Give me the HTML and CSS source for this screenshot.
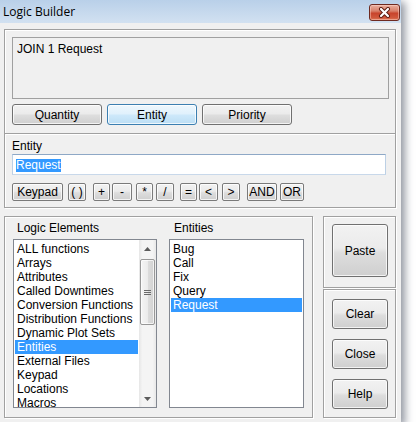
FILE: index.html
```html
<!DOCTYPE html>
<html>
<head>
<meta charset="utf-8">
<link rel="stylesheet" href="styles.css">
</head>
<body>
<div class="window">
  <div class="titlebar">
    <span class="title">Logic Builder</span>
    <div class="close">
      <svg width="13" height="11" viewBox="0 0 13 11">
        <path d="M3 2 L10 9 M10 2 L3 9" stroke="#5a1a10" stroke-width="4" stroke-linecap="round" fill="none"/>
        <path d="M3 2 L10 9 M10 2 L3 9" stroke="#ffffff" stroke-width="2.2" stroke-linecap="round" fill="none"/>
      </svg>
    </div>
  </div>
  <div class="body">
    <div class="group g-expr">
      <div class="expr">JOIN 1 Request</div>
      <div class="tabs">
        <div class="btn tab">Quantity</div>
        <div class="btn tab hot">Entity</div>
        <div class="btn tab">Priority</div>
      </div>
    </div>
    <div class="group g-entity">
      <div class="label">Entity</div>
      <div class="input"><span class="sel">Request</span></div>
      <div class="keys">
        <div class="btn key k-keypad">Keypad</div>
        <div class="btn key k-paren">( )</div>
        <div class="btn key k-plus">+</div>
        <div class="btn key k-minus">-</div>
        <div class="btn key k-mul">*</div>
        <div class="btn key k-div">/</div>
        <div class="btn key k-eq">=</div>
        <div class="btn key k-lt">&lt;</div>
        <div class="btn key k-gt">&gt;</div>
        <div class="btn key k-and">AND</div>
        <div class="btn key k-or">OR</div>
      </div>
    </div>
    <div class="bottom">
      <div class="group g-lists">
        <div class="col col-left">
          <div class="label">Logic Elements</div>
          <div class="list">
            <div class="items">
              <div class="item">ALL functions</div>
              <div class="item">Arrays</div>
              <div class="item">Attributes</div>
              <div class="item">Called Downtimes</div>
              <div class="item">Conversion Functions</div>
              <div class="item">Distribution Functions</div>
              <div class="item">Dynamic Plot Sets</div>
              <div class="item selected">Entities</div>
              <div class="item">External Files</div>
              <div class="item">Keypad</div>
              <div class="item">Locations</div>
              <div class="item">Macros</div>
            </div>
            <div class="scroll">
              <div class="arrow">
                <svg width="7" height="4" viewBox="0 0 7 4"><path d="M0 4 L3.5 0 L7 4 Z" fill="#5b5b5b"/></svg>
              </div>
              <div class="thumb">
                <svg width="7" height="5" viewBox="0 0 7 5"><path d="M0 0.5 H7 M0 2.5 H7 M0 4.5 H7" stroke="#6a6a6a" stroke-width="1"/></svg>
              </div>
              <div class="arrow down">
                <svg width="7" height="4" viewBox="0 0 7 4"><path d="M0 0 L3.5 4 L7 0 Z" fill="#5b5b5b"/></svg>
              </div>
            </div>
          </div>
        </div>
        <div class="col col-right">
          <div class="label">Entities</div>
          <div class="list">
            <div class="items">
              <div class="item">Bug</div>
              <div class="item">Call</div>
              <div class="item">Fix</div>
              <div class="item">Query</div>
              <div class="item selected">Request</div>
            </div>
          </div>
        </div>
      </div>
      <div class="side">
        <div class="group g-paste">
          <div class="btn big paste">Paste</div>
        </div>
        <div class="group g-actions">
          <div class="btn big">Clear</div>
          <div class="btn big">Close</div>
          <div class="btn big">Help</div>
        </div>
      </div>
    </div>
  </div>
</div>
</body>
</html>
```
FILE: styles.css
```css
* { box-sizing: border-box; }

body {
  margin: 0;
  background: #ffffff;
  font-family: "Liberation Sans", Arial, sans-serif;
  font-size: 12px;
  color: #000;
}

.window {
  width: 401px;
  height: 422px;
  background: #f0f0f0;
  box-shadow: 3px 3px 8px 1px rgba(40, 50, 70, 0.5);
}

.titlebar {
  height: 23px;
  background: linear-gradient(#b9d0e9, #d2e1f1);
  display: flex;
  justify-content: space-between;
  align-items: flex-start;
  padding-left: 3px;
  padding-right: 1px;
}

.title {
  font-family: "Open Sans", "Noto Sans", sans-serif;
  font-size: 12px;
  line-height: 23px;
  color: #000;
}

.close {
  margin-top: 4px;
  width: 31px;
  height: 17px;
  border: 1px solid #6e2a20;
  border-radius: 3px;
  background: linear-gradient(#eab0a0, #d8806a 40%, #c8442c 55%, #d0583c 85%, #e07a5a);
  box-shadow: inset 0 0 0 1px rgba(255, 220, 210, 0.45);
  display: flex;
  align-items: center;
  justify-content: center;
}

.body {
  padding: 6px 5px 0 4px;
}

.group {
  border: 1px solid #a0a0a0;
  box-shadow: inset 1px 1px 0 #ffffff, 1px 1px 0 #ffffff;
}

.g-expr {
  padding: 7px 0 8px 7px;
}

.expr {
  width: 377px;
  height: 62px;
  border: 1px solid #a0a0a0;
  padding: 4px;
  line-height: 14px;
}

.tabs {
  display: flex;
  gap: 5px;
  margin-top: 5px;
}

.btn {
  display: flex;
  align-items: center;
  justify-content: center;
  border: 1px solid #707070;
  border-radius: 3px;
  background: linear-gradient(#f2f2f2, #ebebeb 45%, #dddddd 55%, #cfcfcf);
  box-shadow: inset 0 0 0 1px rgba(255, 255, 255, 0.75);
  white-space: nowrap;
}

.tab {
  width: 90px;
  height: 21px;
}

.btn.hot {
  border-color: #3c7fb1;
  background: linear-gradient(#eef7fd, #e1f1fc 45%, #cde8fa 55%, #bcdef4);
}

.g-entity {
  margin-top: -1px;
  padding: 5px 9px 6px 7px;
}

.label {
  height: 14px;
  line-height: 14px;
}

.input {
  width: 374px;
  height: 21px;
  margin-top: 1px;
  border: 1px solid;
  border-color: #8ea8c6 #bcd0e5 #c8d8ea #bcd0e5;
  background: #ffffff;
  padding: 3px;
}

.sel {
  display: inline-block;
  height: 13px;
  line-height: 13px;
  background: #3399ff;
  color: #ffffff;
}

.keys {
  display: flex;
  margin-top: 8px;
  height: 18px;
}

.key {
  height: 18px;
  border-color: #7a7a7a;
  border-radius: 2px;
  line-height: 16px;
}

.k-keypad { width: 51px; }
.k-paren { width: 18px; margin-left: 5px; }
.k-plus { width: 17px; margin-left: 7px; }
.k-minus { width: 20px; margin-left: 2px; }
.k-mul { width: 17px; margin-left: 4px; }
.k-div { width: 18px; margin-left: 3px; }
.k-eq { width: 17px; margin-left: 6px; }
.k-lt { width: 19px; margin-left: 2px; }
.k-gt { width: 18px; margin-left: 4px; }
.k-and { width: 30px; margin-left: 7px; }
.k-or { width: 24px; margin-left: 3px; }

.bottom {
  display: flex;
  gap: 10px;
  margin-top: 8px;
}

.g-lists {
  width: 309px;
  height: 202px;
  display: flex;
  gap: 12px;
  padding: 4px 8px 0 8px;
}

.col-left { width: 144px; }
.col-right { width: 135px; }

.col-left .label { padding-left: 4px; }
.col-right .label { padding-left: 5px; }

.list {
  margin-top: 4px;
  height: 169px;
  border: 1px solid #828790;
  background: #ffffff;
  display: flex;
  overflow: hidden;
}

.items {
  flex: 1;
  padding: 2px 1px 0 1px;
  overflow: hidden;
}

.item {
  height: 14px;
  line-height: 14px;
  padding-left: 2px;
  white-space: nowrap;
}

.item.selected {
  background: #3399ff;
  color: #ffffff;
}

.scroll {
  width: 17px;
  display: flex;
  flex-direction: column;
  align-items: center;
  background: linear-gradient(to right, #e6e6e6, #f4f4f4 20%, #f4f4f4 80%, #e8e8e8);
}

.arrow {
  width: 17px;
  height: 17px;
  display: flex;
  align-items: center;
  justify-content: center;
}

.arrow.down {
  margin-top: auto;
}

.thumb {
  width: 15px;
  height: 66px;
  margin-top: 2px;
  border: 1px solid #979797;
  border-radius: 2px;
  background: linear-gradient(to right, #f5f5f5, #ececec 50%, #dcdcdc 55%, #d2d2d2);
  box-shadow: inset 0 0 0 1px rgba(255, 255, 255, 0.7);
  display: flex;
  align-items: center;
  justify-content: center;
}

.side {
  width: 73px;
  display: flex;
  flex-direction: column;
  gap: 1px;
}

.g-paste {
  height: 72px;
  padding: 7px 0 0 8px;
}

.big {
  width: 56px;
  height: 30px;
}

.paste {
  height: 53px;
}

.g-actions {
  height: 129px;
  padding: 9px 0 0 8px;
  display: flex;
  flex-direction: column;
  gap: 10px;
}
```
